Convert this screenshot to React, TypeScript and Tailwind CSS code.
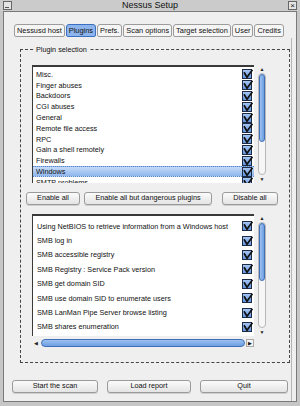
import React from "react";

const topItems = [
  "Misc.",
  "Finger abuses",
  "Backdoors",
  "CGI abuses",
  "General",
  "Remote file access",
  "RPC",
  "Gain a shell remotely",
  "Firewalls",
  "Windows",
  "SMTP problems",
];

const bottomItems = [
  "Using NetBIOS to retrieve information from a Windows host",
  "SMB log in",
  "SMB accessible registry",
  "SMB Registry : Service Pack version",
  "SMB get domain SID",
  "SMB use domain SID to enumerate users",
  "SMB LanMan Pipe Server browse listing",
  "SMB shares enumeration",
];

const tabs = ["Nessusd host", "Plugins", "Prefs.", "Scan options", "Target selection", "User", "Credits"];

function Check() {
  return (
    <svg width="11" height="10" viewBox="0 0 11 10" className="shrink-0">
      <defs>
        <linearGradient id="cb" x1="0" y1="0" x2="0" y2="1">
          <stop offset="0" stopColor="#a9c8f4" />
          <stop offset="1" stopColor="#5f92dc" />
        </linearGradient>
      </defs>
      <rect x="0.5" y="0.5" width="9" height="9" fill="url(#cb)" stroke="#1d2b45" />
      <path d="M2 3.2 L5 8.2 L10.5 0.8" fill="none" stroke="#101010" strokeWidth="1.7" />
    </svg>
  );
}

function VScroll({ thumbH }: { thumbH: number }) {
  return (
    <div className="flex flex-col items-center w-[10px] h-full">
      <div className="h-[8px] flex items-center justify-center text-[5px] leading-none text-[#222]">▲</div>
      <div className="flex-1 w-[8px] rounded-[4px] border border-[#b8b8b8] bg-[#f6f6f6] flex flex-col">
        <div
          className="w-full rounded-[4px] border border-[#3f6fb8] bg-gradient-to-r from-[#9dc0f0] to-[#6e9fe2]"
          style={{ height: thumbH }}
        />
      </div>
      <div className="h-[8px] flex items-center justify-center text-[5px] leading-none text-[#222]">▼</div>
    </div>
  );
}

function Btn({ label, w }: { label: string; w: string }) {
  return (
    <div
      className={`${w} h-[13px] flex items-center justify-center rounded-[3px] border border-[#9a9a9a] bg-gradient-to-b from-[#fbfbfb] to-[#e4e4e4] text-[7.25px] text-[#111] whitespace-nowrap shadow-[0_1px_0_#cfcfcf]`}
    >
      {label}
    </div>
  );
}

export default function App() {
  return (
    <div
      className="w-[300px] h-[406px] flex flex-col bg-[#c6c6c6] text-[#111]"
      style={{ fontFamily: '"Liberation Sans", Arial, sans-serif' }}
    >
      {/* title bar */}
      <div className="h-[11px] flex items-center justify-between px-[3px] bg-[#cbcbcb]">
        <div className="w-[9px] h-[9px] border border-[#666] bg-[#e4e4e4] flex items-start justify-start">
          <div className="w-[4px] h-[1px] mt-[5px] ml-[1px] bg-[#555]" />
        </div>
        <div className="text-[9px] leading-none text-[#111]">Nessus Setup</div>
        <div className="w-[9px] h-[9px] border border-[#666] bg-[#e4e4e4] flex items-center justify-center text-[8px] leading-none">
          ×
        </div>
      </div>

      {/* window body */}
      <div className="flex-1 mx-[3px] mb-[4px] border border-[#7a7a7a] bg-[#efefef] flex flex-col">
        {/* tabs */}
        <div className="flex gap-[1px] pl-[10px] pt-[12px]">
          {tabs.map((t) => (
            <div
              key={t}
              className={
                t === "Plugins"
                  ? "h-[13px] px-[2px] flex items-center whitespace-nowrap rounded-t-[3px] rounded-b-[2px] border border-[#3b6fbf] bg-[#8db4ec] text-[7.4px] leading-none"
                  : "h-[13px] px-[2px] flex items-center whitespace-nowrap rounded-t-[3px] rounded-b-[2px] border border-[#9c9c9c] bg-[#f5f5f5] text-[7.4px] leading-none"
              }
            >
              {t}
            </div>
          ))}
        </div>

        {/* tab panel */}
        <div className="flex-1 ml-[3px] mr-[4px] mt-[1px] border-r border-[#b5b5b5] flex flex-col">
          <fieldset className="ml-[13px] w-[260px] mt-[7px] h-[318px] border border-dashed border-[#444] px-[11px] pb-0">
            <legend className="ml-[2px] px-[2px] text-[7.25px] leading-[9px]">Plugin selection</legend>

            {/* top list */}
            <div className="flex gap-[3px] h-[118px] mt-[11px]">
              <div className="w-[222px] h-full border-t-2 border-l border-[#3a3a3a] bg-white overflow-hidden pt-[2px]">
                {topItems.map((it) => (
                  <div
                    key={it}
                    className={
                      it === "Windows"
                        ? "h-[10.8px] flex items-center justify-between pl-[3px] pr-[1px] bg-gradient-to-b from-[#c4daf8] to-[#8fb6ec] border-y border-dotted border-[#5a86c8]"
                        : "h-[10.8px] flex items-center justify-between pl-[3px] pr-[1px]"
                    }
                  >
                    <span className="text-[7.25px] leading-none">{it}</span>
                    <Check />
                  </div>
                ))}
              </div>
              <VScroll thumbH={68} />
            </div>

            {/* buttons */}
            <div className="flex items-center mt-[9px] -ml-[6px] gap-[4px]">
              <Btn label="Enable all" w="w-[54px]" />
              <Btn label="Enable all but dangerous plugins" w="w-[128px]" />
              <div className="w-[2px]" />
              <Btn label="Disable all" w="w-[56px]" />
            </div>

            {/* bottom list */}
            <div className="flex gap-[3px] h-[122px] mt-[9px]">
              <div className="w-[222px] h-full border-t-2 border-l border-[#3a3a3a] bg-white overflow-hidden pt-[3px]">
                {bottomItems.map((it) => (
                  <div key={it} className="h-[14.4px] flex items-center justify-between pl-[4px] pr-[1px]">
                    <span className="text-[7.25px] leading-none whitespace-nowrap">{it}</span>
                    <Check />
                  </div>
                ))}
              </div>
              <VScroll thumbH={58} />
            </div>

            {/* horizontal scroll */}
            <div className="flex items-center h-[10px] mt-[2px] w-[222px] gap-[1px] pl-[2px]">
              <div className="w-[6px] text-[5px] leading-none text-[#222]">◀</div>
              <div className="flex-1 h-[8px] rounded-[4px] border border-[#3f6fb8] bg-gradient-to-b from-[#9dc0f0] to-[#6e9fe2]" />
              <div className="w-[8px] h-[8px] border border-[#aaa] bg-[#f4f4f4] text-[5px] leading-none flex items-center justify-center">
                ▶
              </div>
            </div>
          </fieldset>

          {/* bottom buttons */}
          <div className="flex items-center mt-[17px] pl-[5px] gap-[9px]">
            <Btn label="Start the scan" w="w-[86px]" />
            <Btn label="Load report" w="w-[84px]" />
            <Btn label="Quit" w="w-[88px]" />
          </div>
        </div>
      </div>
    </div>
  );
}
